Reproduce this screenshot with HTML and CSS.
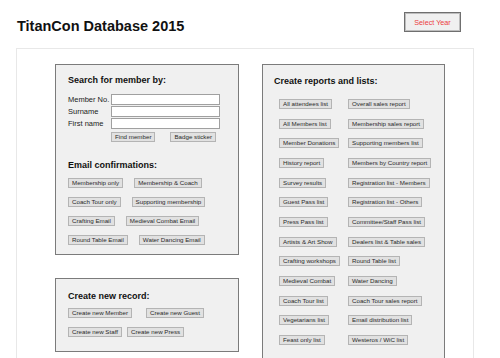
FILE: index.html
```html
<!DOCTYPE html>
<html lang="en">

<head>
  <meta charset="UTF-8">
  <meta name="viewport" content="width=device-width, initial-scale=1.0">
  <title>TitanCon Database 2015</title>
  <link rel="stylesheet" href="styles.css">
</head>

<body>
  <div class="header">
    <h1 class="title">TitanCon Database 2015</h1>
    <button class="year-btn">Select Year</button>
  </div>

  <div class="main">
    <div class="left">
      <div class="box search">
        <h2>Search for member by:</h2>
        <div class="form">
          <label>Member No.</label><input type="text">
          <label>Surname</label><input type="text">
          <label>First name</label><input type="text">
        </div>
        <div class="form-btns">
          <button class="btn">Find member</button>
          <button class="btn">Badge sticker</button>
        </div>

        <h2 class="sub">Email confirmations:</h2>
        <div class="rows">
          <div class="row"><button class="btn">Membership only</button><button class="btn">Membership &amp; Coach</button></div>
          <div class="row"><button class="btn">Coach Tour only</button><button class="btn">Supporting membership</button></div>
          <div class="row"><button class="btn">Crafting Email</button><button class="btn">Medieval Combat Email</button></div>
          <div class="row"><button class="btn">Round Table Email</button><button class="btn">Water Dancing Email</button></div>
        </div>
      </div>

      <div class="box create">
        <h2>Create new record:</h2>
        <div class="rows">
          <div class="row wide"><button class="btn">Create new Member</button><button class="btn">Create new Guest</button></div>
          <div class="row tight"><button class="btn">Create new Staff</button><button class="btn">Create new Press</button></div>
        </div>
      </div>
    </div>

    <div class="box reports">
      <h2>Create reports and lists:</h2>
      <div class="grid">
        <button class="btn">All attendees list</button><button class="btn">Overall sales report</button>
        <button class="btn">All Members list</button><button class="btn">Membership sales report</button>
        <button class="btn">Member Donations</button><button class="btn">Supporting members list</button>
        <button class="btn">History report</button><button class="btn">Members by Country report</button>
        <button class="btn">Survey results</button><button class="btn">Registration list - Members</button>
        <button class="btn">Guest Pass list</button><button class="btn">Registration list - Others</button>
        <button class="btn">Press Pass list</button><button class="btn">Committee/Staff Pass list</button>
        <button class="btn">Artists &amp; Art Show</button><button class="btn">Dealers list &amp; Table sales</button>
        <button class="btn">Crafting workshops</button><button class="btn">Round Table list</button>
        <button class="btn">Medieval Combat</button><button class="btn">Water Dancing</button>
        <button class="btn">Coach Tour list</button><button class="btn">Coach Tour sales report</button>
        <button class="btn">Vegetarians list</button><button class="btn">Email distribution list</button>
        <button class="btn">Feast only list</button><button class="btn">Westeros / WiC list</button>
      </div>
    </div>
  </div>
</body>

</html>
```

FILE: styles.css
```css
body {
  margin: 0;
  font-family: "Liberation Sans", Arial, sans-serif;
  color: #111;
  background-color: #fff;
  overflow: hidden;
}

h1,
h2 {
  margin: 0;
}

.header {
  display: flex;
  justify-content: space-between;
  align-items: flex-start;
  box-sizing: border-box;
  height: 48px;
  padding: 12px 39px 0 17px;
}

.header .title {
  margin-top: 5px;
  font-size: 14.5px;
  line-height: 18px;
  font-weight: bold;
}

.year-btn {
  width: 57px;
  height: 20px;
  padding: 0;
  border: 1px solid #6f6f6f;
  box-shadow: inset 0 0 0 1px #bdbdbd;
  background-color: #f0f0f0;
  color: #ec3b3f;
  font-family: "Liberation Sans", Arial, sans-serif;
  font-size: 7.2px;
}

.main {
  display: flex;
  align-items: flex-start;
  gap: 23px;
  box-sizing: border-box;
  height: 310px;
  margin: 0 26px 0 16px;
  padding: 15px 0 0 38px;
  border: 1px solid #e8e8e8;
  border-bottom: none;
}

.left {
  display: flex;
  flex-direction: column;
  gap: 23px;
}

.box {
  box-sizing: border-box;
  width: 184px;
  background-color: #f0f0f0;
  border: 1px solid #7b7b7b;
}

.box h2 {
  font-size: 9px;
  line-height: 11px;
  font-weight: bold;
}

.search {
  height: 191px;
  padding: 10px 12px 0;
}

.form {
  display: grid;
  grid-template-columns: 43px 109px;
  row-gap: 1px;
  margin-top: 8px;
}

.form label {
  font-size: 7.5px;
  line-height: 11px;
  color: #222;
}

.form input {
  box-sizing: border-box;
  width: 109px;
  height: 11px;
  margin: 0;
  padding: 0;
  border: 1px solid #a0a0a0;
  background-color: #fff;
}

.form-btns {
  display: flex;
  gap: 15px;
  margin: 3px 0 0 43px;
}

.sub {
  margin-top: 18px;
}

.rows {
  display: flex;
  flex-direction: column;
  gap: 9px;
  margin-top: 7px;
}

.row {
  display: flex;
  gap: 11px;
}

.row.wide {
  gap: 14px;
}

.row.tight {
  gap: 5px;
}

.create {
  height: 74px;
  padding: 12px 12px 0;
}

.create .rows {
  margin-top: 6px;
}

.reports {
  width: 183px;
  height: 294px;
  padding: 11px 0 0 11px;
  border-bottom: none;
}

.grid {
  display: grid;
  grid-template-columns: 69px auto;
  justify-items: start;
  row-gap: 9.67px;
  margin: 12px 0 0 5px;
}

.btn {
  box-sizing: border-box;
  height: 10px;
  margin: 0;
  padding: 0 3px;
  border: 1px solid #b4b4b4;
  background-color: #e1e1e1;
  color: #2a2a2a;
  font-family: "Liberation Sans", Arial, sans-serif;
  font-size: 6.2px;
  line-height: 8px;
  white-space: nowrap;
}
```
